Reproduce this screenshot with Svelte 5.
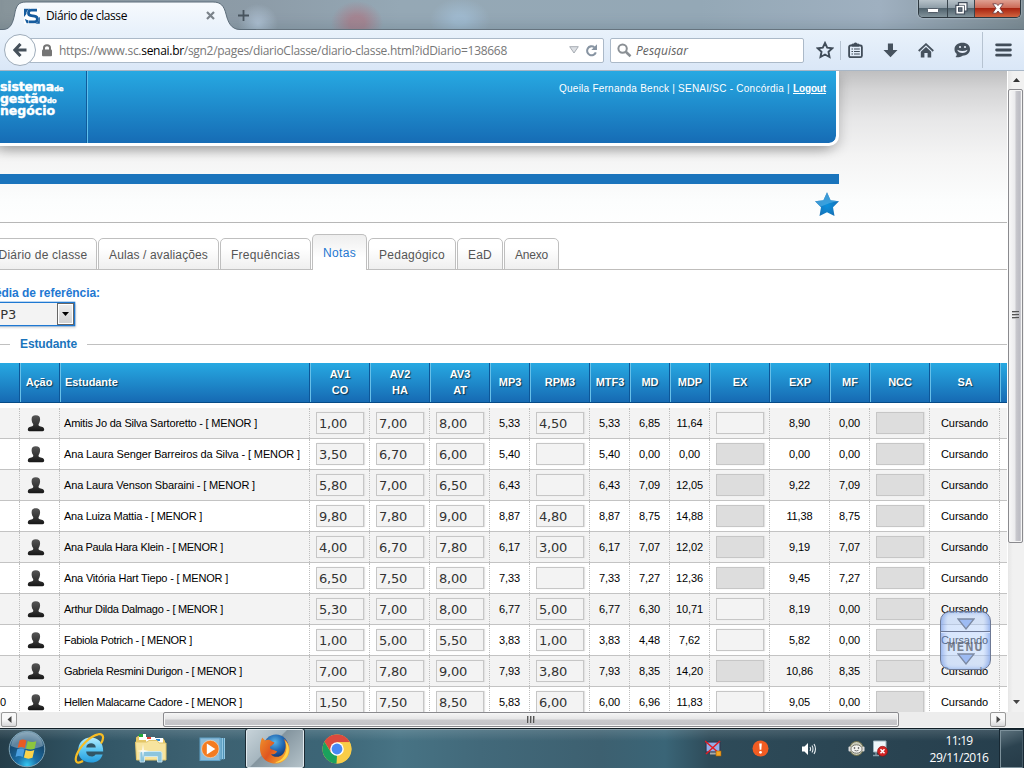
<script>
  // Spreads the letters of a label so that it fills the given width.
  function fit(node, width) {
    node.style.letterSpacing = '0px';
    const count = [...node.textContent].length;
    const natural = node.getBoundingClientRect().width;
    node.style.letterSpacing = `${(width - natural) / count}px`;
  }

  const tabs = [
    { name: 'Diário de classe', box: 108, text: 89 },
    { name: 'Aulas / avaliações', box: 121, text: 99 },
    { name: 'Frequências', box: 91, text: 69 },
    { name: 'Notas', box: 55, text: 33, active: true },
    { name: 'Pedagógico', box: 88, text: 66 },
    { name: 'EaD', box: 46, text: 24 },
    { name: 'Anexo', box: 55, text: 33 }
  ];

  const columns = [
    ['', ''], ['Ação', ''], ['Estudante', ''], ['AV1', 'CO'], ['AV2', 'HA'], ['AV3', 'AT'],
    ['MP3', ''], ['RPM3', ''], ['MTF3', ''], ['MD', ''], ['MDP', ''], ['EX', ''], ['EXP', ''],
    ['MF', ''], ['NCC', ''], ['SA', ''], ['', '']
  ];

  const students = [
    { name: 'Amitis Jo da Silva Sartoretto', w: 193, av: ['1,00', '7,00', '8,00'], mp: '5,33', rpm: '4,50', mtf: '5,33', md: '6,85', mdp: '11,64', ex: true, exp: '8,90', mf: '0,00' },
    { name: 'Ana Laura Senger Barreiros da Silva', w: 236, av: ['3,50', '6,70', '6,00'], mp: '5,40', rpm: '', mtf: '5,40', md: '0,00', mdp: '0,00', ex: false, exp: '0,00', mf: '0,00' },
    { name: 'Ana Laura Venson Sbaraini', w: 191, av: ['5,80', '7,00', '6,50'], mp: '6,43', rpm: '', mtf: '6,43', md: '7,09', mdp: '12,05', ex: false, exp: '9,22', mf: '7,09' },
    { name: 'Ana Luiza Mattia', w: 138, av: ['9,80', '7,80', '9,00'], mp: '8,87', rpm: '4,80', mtf: '8,87', md: '8,75', mdp: '14,88', ex: false, exp: '11,38', mf: '8,75' },
    { name: 'Ana Paula Hara Klein', w: 159, av: ['4,00', '6,70', '7,80'], mp: '6,17', rpm: '3,00', mtf: '6,17', md: '7,07', mdp: '12,02', ex: false, exp: '9,19', mf: '7,07' },
    { name: 'Ana Vitória Hart Tiepo', w: 164, av: ['6,50', '7,50', '8,00'], mp: '7,33', rpm: '', mtf: '7,33', md: '7,27', mdp: '12,36', ex: false, exp: '9,45', mf: '7,27' },
    { name: 'Arthur Dilda Dalmago', w: 159, av: ['5,30', '7,00', '8,00'], mp: '6,77', rpm: '5,00', mtf: '6,77', md: '6,30', mdp: '10,71', ex: true, exp: '8,19', mf: '0,00' },
    { name: 'Fabiola Potrich', w: 128, av: ['1,00', '5,00', '5,50'], mp: '3,83', rpm: '1,00', mtf: '3,83', md: '4,48', mdp: '7,62', ex: true, exp: '5,82', mf: '0,00' },
    { name: 'Gabriela Resmini Durigon', w: 178, av: ['7,00', '7,80', '9,00'], mp: '7,93', rpm: '3,80', mtf: '7,93', md: '8,35', mdp: '14,20', ex: false, exp: '10,86', mf: '8,35' },
    { name: 'Hellen Malacarne Cadore', w: 178, av: ['1,50', '7,50', '8,50'], mp: '5,83', rpm: '6,00', mtf: '6,00', md: '6,96', mdp: '11,83', ex: true, exp: '9,05', mf: '0,00', tail: '0' }
  ];
</script>

{#snippet person()}
  <svg class="person" width="18" height="17" viewBox="0 0 18 17">
    <defs><linearGradient id="pg" x1="0" y1="0" x2="0" y2="1"><stop offset="0" stop-color="#555" /><stop offset=".6" stop-color="#333" /><stop offset="1" stop-color="#161616" /></linearGradient></defs>
    <path fill="url(#pg)" d="M8.8 .3C11.8 .3 13.2 1.8 13.1 4.2C13 6.4 12.4 7.6 11.8 8.8C11.3 10 11.4 10.9 12.8 11.2C15.6 11.7 17.2 12.6 17.2 14.4C17.2 15.8 15.8 16.3 14.6 16.3H3.4C2 16.3 .8 15.8 .8 14.4C.8 12.6 2.4 11.7 5.2 11.2C6.4 10.9 6.5 10 6 8.8C5.2 7.6 4.7 6.4 4.6 4.2C4.6 1.8 5.8 .3 8.8 .3Z" />
  </svg>
{/snippet}

<div class="screen">
  <div class="titlebar">
    <svg class="tabshape" width="256" height="31" viewBox="0 0 256 31">
      <defs><linearGradient id="tg" x1="0" y1="0" x2="0" y2="1"><stop offset="0" stop-color="#f7fafd" /><stop offset="1" stop-color="#e8f1fb" /></linearGradient></defs>
      <path d="M0 29.5H3C11 29.5 13 22 14.5 15C16 6 18 2 26 2H213C221 2 224 6 226 14C228 22 231 29.5 240 29.5H256V31H0Z" fill="url(#tg)" />
      <path d="M0 29.5H3C11 29.5 13 22 14.5 15C16 6 18 2 26 2H213C221 2 224 6 226 14C228 22 231 29.5 240 29.5H256" fill="none" stroke="#5d6d7a" />
    </svg>
    <div class="tabrow">
      <svg class="favicon" width="16" height="16" viewBox="0 0 16 16">
        <rect width="16" height="16" fill="#fff" />
        <path fill="none" stroke="#155b9e" stroke-width="2.7" d="M13 2.2H7.5C3.6 2.2 3.4 7.2 7.2 7.7L10.4 8.1C14.6 8.8 14.2 13.9 10.2 13.9H5" />
        <path fill="#155b9e" d="M0 .8H6.5C3.6 1.6 2.2 3.6 2.4 6L0 9ZM15.8 15.8H11C13.8 14.8 15 12.8 14.6 10.2L15.8 8.8ZM.8 11L4.5 12.6V15.2H2.6Z" />
      </svg>
      <span class="tabtitle" use:fit={81}>Diário de classe</span>
      <svg class="tabclose" width="9" height="9" viewBox="0 0 9 9"><path d="M1 1L8 8M8 1L1 8" stroke="#7b838a" stroke-width="2.2" /></svg>
      <svg class="newtab" width="11" height="11" viewBox="0 0 11 11"><path d="M5.5 0V11M0 5.5H11" stroke="#48545e" stroke-width="1.8" /></svg>
    </div>
    <div class="winbtns">
      <span class="wb min"><svg width="12" height="6"><rect x=".5" y=".5" width="11" height="4" rx="1" fill="#fff" stroke="#535d68" /></svg></span>
      <span class="wb res"><svg width="13" height="13" viewBox="0 0 13 13"><path d="M3.5 .7H12V9H9.5V12H.8V3.3H3.5Z" fill="#fff" stroke="#414c5a" stroke-width="1.2" /><rect x="3.5" y="5.8" width="3.5" height="3.5" fill="#67747f" stroke="#414c5a" /><path d="M3.5 3.3H9.5V9" fill="none" stroke="#414c5a" stroke-width=".8" /></svg></span>
      <span class="wb cls"><svg width="12" height="11" viewBox="0 0 12 11"><path d="M.8 .8H4.4L6 2.6L7.6 .8H11.2L8 5.3L11.4 10.2H7.8L6 8L4.2 10.2H.6L4 5.3Z" fill="#fff" stroke="#64333a" stroke-width=".8" /></svg></span>
    </div>
  </div>

  <div class="toolbar">
    <div class="back"><svg width="14" height="14" viewBox="0 0 14 14"><path d="M7.5 1L1.8 7L7.5 13M2 7H13.5" fill="none" stroke="#45505a" stroke-width="3.1" /></svg></div>
    <div class="urlbar">
      <svg class="lock" width="10" height="13" viewBox="0 0 10 13"><path d="M2 6V3.8C2 .3 8 .3 8 3.8V6" fill="none" stroke="#757575" stroke-width="2" /><rect y="5.5" width="10" height="6.7" rx="1" fill="#757575" /></svg>
      <span class="url" use:fit={448}>https://www.sc.<b>senai.br</b>/sgn2/pages/diarioClasse/diario-classe.html?idDiario=138668</span>
      <svg class="drop" width="10" height="8" viewBox="0 0 10 8"><path d="M.7 .7H9.3L5 7Z" fill="#dde0e4" stroke="#a7acb3" /></svg>
      <svg class="reload" width="13" height="13" viewBox="0 0 13 13"><path d="M9.3 3.2A4.5 4.5 0 1 0 10.8 8.4" fill="none" stroke="#8794a2" stroke-width="2.1" /><path d="M12 .3V6H6.3Z" fill="#8794a2" /></svg>
    </div>
    <div class="search">
      <svg width="15" height="15" viewBox="0 0 15 15"><circle cx="5.6" cy="5.6" r="4.2" fill="none" stroke="#8a8f94" stroke-width="2" /><path d="M8.8 8.8L13.5 13.2" stroke="#8a8f94" stroke-width="2.6" /></svg>
      <i use:fit={52}>Pesquisar</i>
    </div>
    <div class="icons">
      <svg width="18" height="18" viewBox="0 0 18 18"><path d="M9 2L11.2 6.7L16.2 7.3L12.5 10.8L13.5 16L9 13.5L4.5 16L5.5 10.8L1.8 7.3L6.8 6.7Z" fill="none" stroke="#414d59" stroke-width="1.9" /></svg>
      <span class="sep s1"></span>
      <svg width="15" height="17" viewBox="0 0 15 17"><rect x="1.1" y="3.5" width="12.8" height="11.7" rx="1.5" fill="none" stroke="#414d59" stroke-width="1.8" /><path d="M4 4V2.2H5.8C5.8 .6 9.2 .6 9.2 2.2H11V4Z" fill="#414d59" stroke="#414d59" /><path d="M3.5 7H5M6 7H11.8M3.5 9.5H5M6 9.5H11.8M3.5 12H5M6 12H11.8" stroke="#414d59" stroke-width="1.2" /></svg>
      <svg class="dl" width="15" height="15" viewBox="0 0 15 15"><path d="M4.9 .5H10V7H14.5L7.5 14.3L.5 7H4.9Z" fill="#46525e" /></svg>
      <svg class="home" width="16" height="15" viewBox="0 0 16 15"><path d="M.7 8L8 1.2L15.3 8" fill="none" stroke="#46525e" stroke-width="1.8" /><path d="M2.8 8.7L8 4L13.2 8.7V14.5H9.6V10H6.4V14.5H2.8Z" fill="#46525e" /></svg>
      <svg class="smile" width="17" height="16" viewBox="0 0 17 16"><path d="M8.5 .8C13 .8 16 3.4 16 7.3C16 11.5 12.5 13.7 8.6 13.7C6 15.3 3.5 15.5 1.5 15C2.5 14 3 13 2.6 11.8C1 10.5 .5 9 .5 7.3C.5 3.4 4 .8 8.5 .8Z" fill="#46525e" /><circle cx="6" cy="5" r="1.1" fill="#e8effa" /><circle cx="11" cy="5" r="1.1" fill="#e8effa" /><path d="M3.2 7.8C4.5 12.2 12.3 12.2 13.6 7.8C10.5 9.4 6.3 9.4 3.2 7.8Z" fill="#e8effa" /></svg>
      <span class="sep s2"></span>
      <svg class="burger" width="17" height="14" viewBox="0 0 17 14"><path d="M1.6 1.8H15.4M1.6 7H15.4M1.6 12.2H15.4" stroke="#414d59" stroke-width="2.8" stroke-linecap="round" /></svg>
    </div>
  </div>

  <div class="viewport">
    <div class="page">
      <div class="banner">
        <div class="brand">
          <div><span use:fit={54}>sistema</span><small>de</small></div>
          <div><span use:fit={47}>gestão</span><small>do</small></div>
          <div><span use:fit={55}>negócio</span></div>
        </div>
        <div class="user"><span use:fit={234}>Queila Fernanda Benck | SENAI/SC - Concórdia |&nbsp;</span><u use:fit={33}>Logout</u></div>
      </div>
      <div class="stripe"></div>
      <div class="starrow">
        <svg width="25" height="25" viewBox="0 0 25 25">
          <defs><radialGradient id="sg" cx=".5" cy=".55" r=".5"><stop offset="0" stop-color="#0a90dd" /><stop offset="1" stop-color="#1771b6" /></radialGradient></defs>
          <path fill="url(#sg)" d="M12 .3L15.6 8.3L24 9.3L18 15.2L19.5 24L12 20.2L4.5 24L6 15.2L0 9.3L8.4 8.3Z" />
          <path fill="#56b1e4" opacity=".6" d="M12 .3L15.6 8.3L23.8 9.3C17 9.7 11 12.5 5.8 14.6L0 9.3L8.4 8.3Z" />
        </svg>
      </div>

      <div class="tabs">
        {#each tabs as tab}
          <div class="tab" class:active={tab.active} style:width="{tab.box}px"><span use:fit={tab.text}>{tab.name}</span></div>
        {/each}
      </div>

      <div class="reference">
        <b use:fit={115}>Média de referência:</b>
        <div class="select"><span>MP3</span><i><svg width="7" height="4"><path d="M0 0H7L3.5 4Z" fill="#000" /></svg></i></div>
      </div>
      <div class="legend"><b use:fit={57}>Estudante</b></div>

      <div class="grid head">
        {#each columns as [top, bottom], i}
          <div class="th" class:left={i === 2}><span>{top}</span>{#if bottom}<span>{bottom}</span>{/if}</div>
        {/each}
      </div>
      <div class="rows">
        {#each students as s}
          <div class="grid row">
            <div class="td tail">{s.tail ?? ''}</div>
            <div class="td">{@render person()}</div>
            <div class="td name"><span use:fit={s.w}>{s.name} - [ MENOR ]</span></div>
            {#each s.av as value}<div class="td"><div class="input">{value}</div></div>{/each}
            <div class="td">{s.mp}</div>
            <div class="td"><div class="input">{s.rpm}</div></div>
            <div class="td">{s.mtf}</div>
            <div class="td">{s.md}</div>
            <div class="td">{s.mdp}</div>
            <div class="td"><div class="input" class:off={!s.ex}></div></div>
            <div class="td">{s.exp}</div>
            <div class="td">{s.mf}</div>
            <div class="td"><div class="input off"></div></div>
            <div class="td"><span use:fit={47}>Cursando</span></div>
            <div class="td last"></div>
          </div>
        {/each}
      </div>

      <div class="menu">
        <div class="mtop"><svg width="18" height="12" viewBox="0 0 18 12"><path d="M1 1H17L9 11Z" fill="#9dbbf3" stroke="#7d8aa3" stroke-width="1.3" /></svg></div>
        <div class="mbot"><b use:fit={36}>MENU</b><svg width="18" height="12" viewBox="0 0 18 12"><path d="M1 1H17L9 11Z" fill="#9dbbf3" stroke="#7d8aa3" stroke-width="1.3" /></svg></div>
      </div>
    </div>
    <div class="vscroll">
      <div class="arrow"><svg width="7" height="4"><path d="M3.5 0L7 4H0Z" fill="#333" /></svg></div>
      <div class="vthumb"><i></i><i></i><i></i></div>
      <div class="arrow bottom"><svg width="7" height="4"><path d="M0 0H7L3.5 4Z" fill="#444" /></svg></div>
    </div>
  </div>

  <div class="hscroll">
    <div class="hbtn"><svg width="5" height="7"><path d="M4.5 0V7L.5 3.5Z" fill="#444" /></svg></div>
    <div class="hthumb"><i></i><i></i><i></i></div>
    <div class="hbtn right"><svg width="5" height="7"><path d="M.5 0V7L4.5 3.5Z" fill="#444" /></svg></div>
  </div>

  <div class="taskbar">
    <svg class="start" width="38" height="38" viewBox="0 0 38 38">
      <defs>
        <radialGradient id="orb" cx=".5" cy=".95" r=".95"><stop offset="0" stop-color="#35c8f2" /><stop offset=".3" stop-color="#1b6ea6" /><stop offset=".7" stop-color="#174a70" /><stop offset="1" stop-color="#6f93a9" /></radialGradient>
      </defs>
      <circle cx="19" cy="19" r="17.8" fill="url(#orb)" stroke="#7ea4b8" />
      <path d="M3 16C4 6 12 2 19 2S34 6 35 16C27 20 11 20 3 16Z" fill="#c9dae3" opacity=".4" />
      <path d="M11.5 10.5C13.5 9 16 9.2 18.4 10.4L16.8 18C14.2 16.8 12 16.8 9.6 17.9Z" fill="#ea5b24" />
      <path d="M19.7 10.9C22.5 12.3 25.3 12.4 28.3 11.2L26.6 18.8C24 20 21 19.8 18 18.6Z" fill="#8cc63f" />
      <path d="M9.2 19.3C11.6 18.2 13.9 18.2 16.5 19.4L14.7 27C12.2 25.9 9.9 25.8 7.5 26.9Z" fill="#4b9fe0" />
      <path d="M17.7 19.9C20.5 21.3 23.4 21.3 26.3 20.1L24.5 27.8C21.6 29 18.8 28.9 15.9 27.5Z" fill="#fcd34a" />
    </svg>
    <svg class="ie" width="32" height="34" viewBox="0 0 32 34">
      <defs><linearGradient id="ieg" x1="0" y1="0" x2="0" y2="1"><stop offset="0" stop-color="#b5ecff" /><stop offset=".5" stop-color="#5bc6f2" /><stop offset="1" stop-color="#239bdd" /></linearGradient></defs>
      <path fill="url(#ieg)" d="M16.5 5.5C24.5 5.5 29.5 11 29.2 19.6H12.2C12.5 25 19.5 26 21.5 22.5H28.7C27 28 22.5 30.8 17 30.6C8.7 30.3 4.2 25.2 4.2 18.4C4.2 11 9.2 5.5 16.5 5.5ZM12.2 15.4H21.8C21.5 9.8 12.8 9.8 12.2 15.4Z" />
      <path d="M27 11.5C30.8 5.5 29 1 24 2.3C16 4 6 14 2.6 23C.2 30 3 32.5 9 29" fill="none" stroke="#f8bd24" stroke-width="2.2" />
    </svg>
    <svg class="folder" width="34" height="32" viewBox="0 0 34 32">
      <path d="M2 7V4.5L4 3H11L13 5H29L31 8V26H2Z" fill="#e6c765" />
      <path d="M5 1H12V7H5ZM12 4H21V9H12ZM21 5H29V10H21Z" fill="#fff" />
      <path fill="#23a83b" d="M5 1H9V4H5Z" /><path fill="#e64135" d="M13 4H17V6H13Z" /><path fill="#278bd9" d="M22 6H26V8H22Z" />
      <path d="M1.5 9H13L15 7.5H23L25 10H32V27H2.5Z" fill="#f7e49f" stroke="#e1c56b" />
      <path d="M6 29V20Q6 18.5 8 18.5H26Q28 18.5 28 20V29H23.5V23.5H10.5V29Z" fill="#85c3e2" stroke="#cdeaf6" opacity=".93" />
      <path d="M9 11L10 17L15 18L10 19L9 25L8 19L3 18L8 17Z" fill="#fff" opacity=".75" />
    </svg>
    <svg class="wmp" width="28" height="28" viewBox="0 0 28 28">
      <path d="M7 3H26V24L7 25Z" fill="#93c8e4" /><path d="M22.2 3V25M24.5 3V24.5" stroke="#4f93b6" /><rect x="1" y="3" width="20" height="22.5" fill="#8ebdda" stroke="#60a1c7" />
      <circle cx="11.3" cy="14" r="8.7" fill="#f47b20" stroke="#fff0da" stroke-width=".5" /><path d="M7.8 8.5L16.3 14L7.8 19.5Z" fill="#fff" />
    </svg>
    <div class="ffbtn">
      <svg width="32" height="32" viewBox="0 0 32 32">
        <defs>
          <radialGradient id="globe" cx=".45" cy=".3" r=".7"><stop offset="0" stop-color="#58b4e6" /><stop offset=".5" stop-color="#2167b2" /><stop offset="1" stop-color="#12295f" /></radialGradient>
          <linearGradient id="fox" x1="0" y1="0" x2="1" y2=".6"><stop offset="0" stop-color="#f0902a" /><stop offset=".5" stop-color="#df5620" /><stop offset="1" stop-color="#f6a92f" /></linearGradient>
        </defs>
        <circle cx="17" cy="14" r="12.5" fill="url(#globe)" />
        <path d="M3.2 4.5L6 7.6C8.4 6.2 11 6.6 12.6 8.2L15.5 9.4C14.8 11.4 12.6 12.2 11.2 13.4C10.6 15.4 12 16.6 14.2 16.8L18.2 18.4C16.8 20.8 14.4 21.6 12 21.2C15 25 21.4 24.4 24.4 20.4C27.4 16 27.2 10 24.6 5.8C30 9 31.8 15.4 29.8 21C27.2 28 20.6 31.4 14 30.4C6.6 29.2 1.4 23.4 1 16.4C.9 12 1.6 8 3.2 4.5Z" fill="url(#fox)" />
        <path d="M26.2 7.4C31.5 13 31 22 25.4 26.6C22.6 29 19 30 16 29.6C23.6 27.6 28.6 20.6 27.2 12Z" fill="#ffd54a" />
      </svg>
    </div>
    <svg class="chrome" width="30" height="30" viewBox="0 0 30 30">
      <circle cx="15" cy="15" r="14.5" fill="#f9cd48" />
      <path d="M2.4 7.8A14.5 14.5 0 0 1 27.8 8.3H15L9 18Z" fill="#dc4a3d" />
      <path d="M2.4 7.8L9.2 18.7L15 21.7L14.5 29.5A14.5 14.5 0 0 1 2.4 7.8Z" fill="#1ba15d" />
      <path d="M27.8 8.3H15L21 18.7L14.5 29.5A14.5 14.5 0 0 0 27.8 8.3Z" fill="#f9cd48" />
      <circle cx="15" cy="15" r="6.8" fill="#fff" /><circle cx="15" cy="15" r="5.4" fill="#4889f4" />
    </svg>
    <div class="tray">
      <svg class="t1" width="17" height="17" viewBox="0 0 17 17"><rect x="1" y="2" width="14" height="10" fill="#93aee9" stroke="#31384e" stroke-width="1.2" /><path d="M5 13.5H12" stroke="#aaa" stroke-width="2" /><path d="M0 1L15 14M15 1L1 14" stroke="#e31b23" stroke-width="1.5" /><rect x="11" y="11" width="5" height="5" fill="#f6a623" stroke="#a66007" stroke-width=".6" /></svg>
      <svg class="t2" width="17" height="17" viewBox="0 0 17 17"><circle cx="8.5" cy="8.5" r="8" fill="#f25c22" /><path d="M7.2 3.5H9.8L9.3 9.7H7.7Z" fill="#fff" /><circle cx="8.5" cy="12.3" r="1.4" fill="#fff" /></svg>
      <svg class="t3" width="16" height="16" viewBox="0 0 16 16"><path d="M1 5.5H3.5L7 2V14L3.5 10.5H1Z" fill="#fff" /><path d="M9 6Q10.2 8 9 10M11 4.5Q13 8 11 11.5M13 3Q16 8 13 13" fill="none" stroke="#e6edf1" stroke-width="1.1" /></svg>
      <svg class="t4" width="17" height="17" viewBox="0 0 17 17"><ellipse cx="8.5" cy="8.5" rx="6.7" ry="7" fill="#c9cbb9" stroke="#706f48" /><rect x=".5" y="6.5" width="2.5" height="5" rx="1" fill="#ddd" /><rect x="14" y="6.5" width="2.5" height="5" rx="1" fill="#ddd" /><ellipse cx="8.5" cy="9" rx="5.6" ry="4.2" fill="#f4f4f0" stroke="#77786d" /><circle cx="6.5" cy="8" r=".8" fill="#333" /><circle cx="10.5" cy="8" r=".8" fill="#333" /><path d="M6.5 10.3Q8.5 11.5 10.5 10.3" fill="none" stroke="#555" stroke-width=".8" /></svg>
      <svg class="t5" width="16" height="17" viewBox="0 0 16 17"><path d="M1.5 1H14V12H1.5Z" fill="#eef6fa" stroke="#9db3bd" /><path d="M4 12V16M1 15.5H7" stroke="#879ca8" stroke-width="1.3" /><circle cx="10.5" cy="11.3" r="5" fill="#d32323" stroke="#881111" stroke-width=".6" /><path d="M8.5 9.3L12.5 13.3M12.5 9.3L8.5 13.3" stroke="#fff" stroke-width="1.5" /></svg>
    </div>
    <div class="clock"><span use:fit={27}>11:19</span><span use:fit={59}>29/11/2016</span></div>
    <div class="desktop"></div>
  </div>
</div>

<style>
  :global(body) { margin: 0; overflow: hidden; }
  .screen { width: 1024px; height: 768px; overflow: hidden; display: grid; grid-template-rows: 30px 41px 641px 16px 40px; font-family: "Liberation Sans", Arial, sans-serif; white-space: nowrap; background: #fff; }
  .screen * { box-sizing: border-box; }
  svg { display: block; flex: none; }
  span, b, i, u { flex: none; }

  .titlebar { position: relative; display: flex; justify-content: space-between; align-items: flex-start; background: radial-gradient(circle at 258px 24px, rgba(185, 205, 225, .75), transparent 20px), radial-gradient(ellipse 26px 22px at 357px 23px, rgba(172, 120, 132, .7) 30%, transparent), radial-gradient(ellipse 30px 22px at 460px 20px, rgba(165, 195, 220, .65) 20%, transparent), linear-gradient(90deg, #87949a 0, #8d9ca8 260px, #95a8b5 400px, #94a8b6 700px, #9fb0c0 880px, #7d8c94 1024px); border-bottom: 1px solid #66747f; box-shadow: inset 0 -12px 12px -8px rgba(75, 95, 108, .22); }
  .tabshape { position: absolute; left: 0; top: 0; }
  .tabrow { position: relative; display: flex; align-items: center; height: 31px; padding-left: 24px; }
  .tabtitle { margin-left: 6px; font: 12px "Open Sans", sans-serif; color: #000; }
  .tabclose { margin-left: 79px; }
  .newtab { margin-left: 23px; }
  .winbtns { display: flex; height: 18px; width: 103px; margin-right: 3px; border: 1px solid #2d3840; border-top: 0; border-radius: 0 0 5px 5px; overflow: hidden; box-shadow: 0 0 2px #d5e1e8; }
  .wb { display: flex; align-items: center; justify-content: center; background: linear-gradient(#b7c2c9 0, #8f9ea8 45%, #51636e 50%, #82939b 100%); border-right: 1px solid #39454d; }
  .min { width: 29px; padding-top: 4px; }
  .res { width: 27px; }
  .cls { width: 46px; border: 0; background: linear-gradient(#dfa091 0, #cc6b58 45%, #a82410 50%, #d16440 100%); }

  .toolbar { display: flex; align-items: center; background: linear-gradient(#e9f2fb, #dae7f7); border-bottom: 1px solid #a7b6c6; }
  .back { position: relative; z-index: 1; width: 32px; height: 32px; margin-left: 4px; border-radius: 50%; border: 1px solid #9eacba; background: #fbfdfe; display: flex; align-items: center; justify-content: center; flex: none; }
  .urlbar { width: 576px; height: 25px; margin-left: -8px; flex: none; display: flex; align-items: center; background: #fff; border: 1px solid #abb9c8; border-radius: 2px; padding-left: 13px; }
  .url { margin-left: 7px; font: 12px "Open Sans", sans-serif; color: #777; }
  .url b { font-weight: 400; color: #000; }
  .drop { margin-left: 62px; }
  .reload { margin-left: 6px; }
  .search { width: 194px; height: 25px; margin-left: 6px; flex: none; display: flex; align-items: center; gap: 4px; border: 1px solid #abb9c8; border-radius: 2px; background: #fff; padding-left: 6px; font: italic 12px "Open Sans", sans-serif; color: #616161; }
  .icons { display: flex; align-items: center; margin-left: 12px; }
  .sep { width: 1px; background: #b6c3d1; }
  .s1 { height: 19px; margin: 0 7px 0 6px; }
  .s2 { height: 36px; margin: 0 12px 0 11px; }
  .dl { margin-left: 20px; }
  .home { margin-left: 20px; }
  .smile { margin-left: 20px; }

  .viewport { display: grid; grid-template-columns: 1007px 17px; min-height: 0; overflow: hidden; }
  .page { position: relative; overflow: hidden; background: linear-gradient(#bfbfc0 0, #d4d4d5 18px, #e7e7e8 48px, #f4f4f4 86px, #fcfdfd 130px, #fff 160px); }
  .banner { width: 839px; height: 75px; display: flex; justify-content: space-between; border: solid #fff; border-width: 0 3px 3px 0; border-radius: 0 0 10px 0; background: linear-gradient(#27a9e2, #166cb5) padding-box, #fff; box-shadow: -8px 4px 12px rgba(0, 0, 0, .22), 2px 4px 12px rgba(0, 0, 0, .16); }
  .brand { width: 88px; border-right: 1px solid #5fc0ec; box-shadow: inset -1px 0 #105b9b; padding-top: 10px; color: #fff; font: bold 12.5px/12px "DejaVu Sans", sans-serif; -webkit-text-stroke: .4px #fff; }
  .brand div { display: flex; align-items: baseline; height: 12px; }
  .brand small { font-size: 7px; line-height: 7px; letter-spacing: -.2px; }
  .user { display: flex; padding: 12px 10px 0 0; color: #fff; font-size: 10px; line-height: 12px; }
  .user u { font-weight: bold; }
  .stripe { width: 839px; height: 10px; margin-top: 28px; background: #1a74bc; }
  .starrow { height: 39px; padding: 8px 0 0 815px; border-bottom: 1px solid #b7b7b7; }

  .tabs { height: 47px; display: flex; align-items: flex-end; gap: 1px; margin-left: -11px; box-shadow: inset 0 -1px #bfbdbb; }
  .tab { height: 32px; flex: none; display: flex; align-items: center; justify-content: center; border: 1px solid #bfbfbf; border-radius: 5px 5px 0 0; background: linear-gradient(#fff 30%, #efefef); color: #555; font-size: 12px; padding-top: 2px; }
  .tab.active { height: 36px; background: linear-gradient(#eee, #fff 65%); border-bottom: 0; color: #1e78d2; padding-top: 1px; }
  .reference { height: 68px; padding-top: 15px; margin-left: -15px; color: #1e78d2; font-size: 12px; line-height: 16px; }
  .reference b { display: inline-block; }
  .select { display: flex; justify-content: space-between; width: 90px; height: 24px; margin-top: 1px; border: 1px solid #1e78d2; box-shadow: 0 0 0 .3px #1e78d2, 1px 2px 2px #ddd; background: #f3f3f3; color: #333; font: 13px/24px "DejaVu Sans", sans-serif; padding-left: 3px; }
  .select i { display: flex; align-items: center; justify-content: center; width: 17px; border: 1px solid #666; box-shadow: inset 0 0 0 1px #fff; background: linear-gradient(#eee, #d0d0d0); }
  .legend { display: grid; grid-template-columns: 10px 57px 1fr; gap: 10px; align-items: center; height: 12px; color: #1a74bc; font-size: 12px; line-height: 12px; }
  .legend::before, .legend::after { content: ""; height: 1px; margin-top: 1px; background: #c0c0c0; }
  .legend b { display: inline-block; width: max-content; }

  .grid { display: grid; grid-template-columns: 20px 40px 250px 60px 60px 60px 40px 60px 40px 40px 40px 60px 60px 40px 60px 70px 7px; }
  .head { height: 40px; margin-top: 13px; background: linear-gradient(#27a9e2, #166ab3); border-bottom: 1px solid #064b87; }
  .th { display: flex; flex-direction: column; align-items: center; justify-content: center; padding-bottom: 2px; border-left: 1px solid #67bfe8; border-right: 1px solid #0c5798; color: #fff; font: bold 11px/16px "Liberation Sans", sans-serif; letter-spacing: -.05px; text-shadow: 1px 1px 1px rgba(0, 0, 0, .6); }
  .th:first-child { border-left: 0; }
  .th:last-child { border-right: 0; }
  .th.left { align-items: flex-start; padding-left: 4px; }
  .th:nth-child(2) { padding-right: 2px; }
  .rows { padding-top: 5px; background: #fff; }
  .row { height: 31px; border-bottom: 1px solid #c3c3c3; background: #fff; }
  .row:nth-child(odd) { background: #f3f3f3; }
  .td { display: flex; align-items: center; justify-content: center; border-right: 1px dotted #bdbdbd; font-size: 11px; color: #000; letter-spacing: -.12px; min-width: 0; }
  .td.last { border: 0; }
  .td.name { justify-content: flex-start; padding-left: 4px; }
  .td.tail { justify-content: flex-start; }
  .person { margin-right: 7px; }
  .input { width: 48px; height: 22px; margin: -1px 0 0 1px; padding-left: 2px; border: 1px solid #c6c6c6; background: #f3f3f3; box-shadow: 1px 0 1px #e2e2e2; font: 13px/22px "DejaVu Sans", sans-serif; letter-spacing: -.2px; color: #333; }
  .input.off { background: #ddd; }

  .menu { position: absolute; left: 940px; top: 540px; width: 51px; height: 59px; border: 1px solid #6d7995; border-radius: 10px; overflow: hidden; display: grid; grid-template-rows: 20px 1fr; background: linear-gradient(90deg, rgba(122, 158, 232, .6), rgba(176, 205, 250, .5) 14%, rgba(176, 205, 250, .45) 86%, rgba(122, 158, 232, .6)); box-shadow: inset 0 0 4px #8dafee; }
  .mtop { display: flex; justify-content: center; padding-top: 6px; border-bottom: 1px solid #6d7995; }
  .mbot { display: flex; flex-direction: column; align-items: center; padding-top: 7px; border-top: 1px solid #d8e5ff; }
  .mbot b { font: bold 13px/14px "DejaVu Sans Mono", monospace; color: rgba(90, 95, 108, .75); }
  .mbot svg { margin-top: -1px; }

  .vscroll { display: grid; grid-template-rows: 18px 454px 1fr; background: linear-gradient(90deg, #e6e6e6, #f1f1f1 30%); border-left: 1px solid #fff; }
  .arrow { display: flex; justify-content: center; padding-top: 7px; }
  .arrow.bottom { align-items: flex-end; padding-bottom: 8px; }
  .vthumb { border: 1px solid #8a8a8e; border-radius: 2px; margin-right: 1px; background: linear-gradient(90deg, #f8f8f8, #ebebed 45%, #c8c8cd 55%, #bdbdc4 80%, #d8d8dc); box-shadow: inset 0 0 0 1px #f5f5f5; display: flex; flex-direction: column; align-items: center; justify-content: center; gap: 1px; padding-bottom: 2px; }
  .vthumb i { width: 7px; height: 2px; background: #555; border-bottom: 1px solid #bbb; }
  .hscroll { display: grid; grid-template-columns: 16px 146px 736px 91px 16px; justify-content: start; padding-left: 1px; background: #ededed; border-bottom: 1px solid #f4f4f4; }
  .hbtn { height: 15px; border: 1px solid #999; border-radius: 2px; background: linear-gradient(#f8f8f8 50%, #d7d7d9); display: flex; align-items: center; justify-content: center; }
  .hbtn.right { grid-column: 5; }
  .hthumb { grid-column: 3; height: 15px; border: 1px solid #8a8a8e; border-radius: 2px; background: linear-gradient(#f5f5f5, #e6e6e7 45%, #c9c9cc 55%, #c2c2c7); box-shadow: inset 0 0 0 1px #f5f5f5; display: flex; align-items: center; justify-content: center; gap: 1px; }
  .hthumb i { width: 2px; height: 7px; background: #555; border-right: 1px solid #aaa; }

  .taskbar { display: flex; align-items: center; background: linear-gradient(rgba(255, 255, 255, .14), transparent 12px), linear-gradient(90deg, #243d49 0, #315565 90px, #3d6171 200px, #3c6576 320px, #477384 400px, #42697a 480px, #3d6070 600px, #3a6577 665px, #2e4b59 710px, #263e4c 1024px); border-top: 1px solid #101e26; box-shadow: inset 0 1px #8198a3; }
  .start { margin-left: 8px; }
  .ie { margin-left: 28px; }
  .folder { margin-left: 28px; }
  .wmp { margin-left: 31px; }
  .ffbtn { width: 58px; height: 39px; flex: none; margin-left: 19px; display: flex; align-items: center; justify-content: center; border: 1px solid #e0e9ee; border-radius: 2px; outline: 1px solid #1a2a33; outline-offset: 0; background: linear-gradient(135deg, #c7d3d9 0, #a6b6bf 42%, #84959f 44%, #b4c2c9 100%); }
  .chrome { margin-left: 18px; }
  .tray { display: flex; align-items: center; margin-left: 353px; }
  .t2 { margin-left: 30px; }
  .t3 { margin-left: 32px; }
  .t4 { margin-left: 31px; }
  .t5 { margin-left: 7px; }
  .clock { width: 60px; margin-left: 41px; display: flex; flex-direction: column; align-items: center; color: #fff; font: 12px/17px "Open Sans", sans-serif; flex: none; }
  .desktop { width: 23px; height: 38px; flex: none; margin-left: 11px; border: 1px solid #7d919b; border-right-color: #465b67; background: linear-gradient(160deg, #5c717c, #2c4350 45%, #263b48); outline: 1px solid #172833; }
</style>
